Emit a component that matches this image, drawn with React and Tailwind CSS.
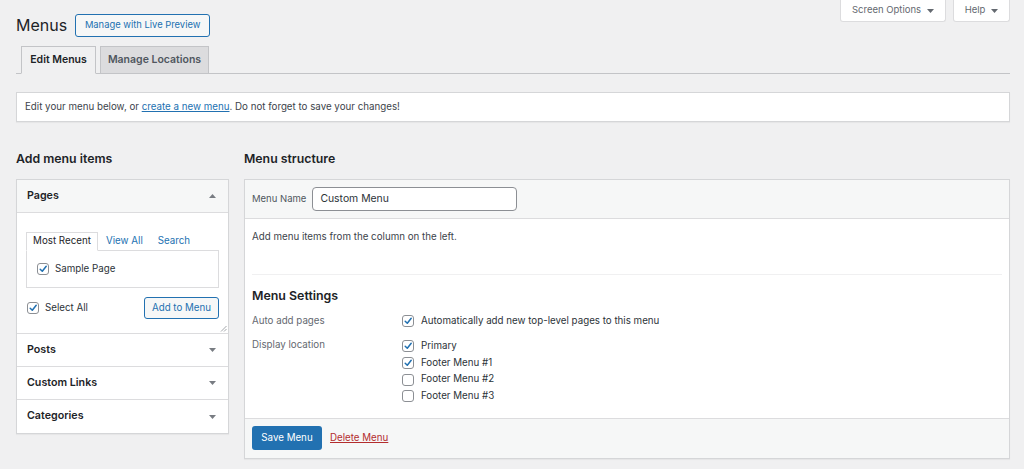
import React from "react";

const Tri = ({ up }) => (
  <svg width="7" height="4" viewBox="0 0 7 4" className="shrink-0">
    <path d={up ? "M0 4 L3.5 0 L7 4Z" : "M0 0 L7 0 L3.5 4Z"} fill="currentColor" />
  </svg>
);

const Check = ({ checked }) => (
  <span className="w-[12px] h-[12px] rounded-[3px] border border-[#8c8f94] bg-white flex items-center justify-center shrink-0">
    {checked && (
      <svg width="10" height="10" viewBox="0 0 10 10">
        <path d="M2.2 5.2 L4.3 7.3 L8.2 2.3" fill="none" stroke="#2271b1" strokeWidth="1.5" strokeLinecap="round" strokeLinejoin="round" />
      </svg>
    )}
  </span>
);

const Accordion = ({ title, last }) => (
  <div className={`h-[33px] flex items-center justify-between pl-[10px] pr-[12px] ${last ? "" : "border-b border-[#dcdcde]"}`}>
    <span className="text-[10.7px] font-semibold text-[#1d2327]">{title}</span>
    <span className="text-[#787c82]"><Tri /></span>
  </div>
);

export default function App() {
  return (
    <div className="w-[1024px] h-[469px] overflow-hidden bg-[#f0f0f1] text-[#1d2327] font-[family-name:Inter,Noto_Sans,sans-serif] text-[9.75px]">
      {/* top row */}
      <div className="flex justify-between items-start pl-[16px] pr-[14px]">
        <div className="flex items-center gap-[8px] pt-[14px]">
          <h1 className="text-[16px] leading-[23px] font-normal text-[#1d2327]">Menus</h1>
          <button className="h-[23px] w-[135px] border border-[#2271b1] rounded-[3px] bg-[#f6f7f7] text-[#2271b1] text-[9.4px]">
            Manage with Live Preview
          </button>
        </div>
        <div className="flex gap-[7px]">
          <div className="h-[22px] w-[106px] bg-white border border-t-0 border-[#dcdcde] rounded-b-[3px] flex items-center justify-center gap-[6px] text-[9.5px] text-[#646970]">
            Screen Options <Tri />
          </div>
          <div className="h-[22px] w-[57px] bg-white border border-t-0 border-[#dcdcde] rounded-b-[3px] flex items-center justify-center gap-[6px] text-[9.5px] text-[#646970]">
            Help <Tri />
          </div>
        </div>
      </div>

      {/* tabs */}
      <div className="ml-[16px] mr-[14px] mt-[9px] h-[28px] flex items-end gap-[4px] pl-[5px] border-b border-[#c3c4c7]">
        <div className="h-[28px] w-[75px] -mb-px flex items-center justify-center border border-[#c3c4c7] border-b-[#f0f0f1] bg-[#f0f0f1] text-[10.5px] font-semibold text-[#1d2327]">
          Edit Menus
        </div>
        <div className="h-[28px] w-[109px] -mb-px flex items-center justify-center border border-[#c3c4c7] bg-[#dcdcde] text-[10.5px] font-semibold text-[#50575e]">
          Manage Locations
        </div>
      </div>

      {/* notice */}
      <div className="ml-[16px] mr-[14px] mt-[18px] h-[30px] flex items-center px-[8px] bg-white border border-[#d5d6d8] shadow-[0_1px_1px_rgba(0,0,0,0.04)] text-[9.75px] text-[#3c434a]">
        <span>
          Edit your menu below, or <span className="text-[#2271b1] underline">create a new menu</span>. Do not forget to save your changes!
        </span>
      </div>

      {/* columns */}
      <div className="ml-[16px] mr-[14px] mt-[27px] flex gap-[15px] items-start">
        {/* left */}
        <div className="w-[213px] shrink-0">
          <h2 className="h-[20px] leading-[20px] text-[12.3px] font-semibold text-[#1d2327]">Add menu items</h2>
          <div className="mt-[10px] bg-white border border-[#d5d6d8] shadow-[0_1px_1px_rgba(0,0,0,0.04)]">
            <div className="h-[33px] flex items-center justify-between pl-[10px] pr-[12px] bg-[#f6f7f7] border-b border-[#dcdcde]">
              <span className="text-[10.7px] font-semibold">Pages</span>
              <span className="text-[#787c82]"><Tri up /></span>
            </div>
            <div className="relative pt-[19px] pb-[14px] pl-[9px] pr-[9px] border-b border-[#dcdcde]">
              <div className="flex items-end h-[18px] text-[9.75px]">
                <div className="relative z-10 h-[19px] w-[72px] -mb-px flex items-center justify-center border border-[#dcdcde] border-b-white bg-white text-[#1d2327]">
                  Most Recent
                </div>
                <span className="ml-[8px] h-[18px] flex items-center text-[#2271b1]">View All</span>
                <span className="ml-[15px] h-[18px] flex items-center text-[#2271b1]">Search</span>
              </div>
              <div className="h-[38px] border border-[#dcdcde] flex items-center gap-[6px] pl-[10px]">
                <Check checked />
                <span className="text-[#2c3338]">Sample Page</span>
              </div>
              <div className="mt-[9px] h-[22px] flex items-center justify-between">
                <div className="flex items-center gap-[6px] pl-[1px]">
                  <Check checked />
                  <span className="text-[#2c3338]">Select All</span>
                </div>
                <button className="h-[22px] w-[75px] border border-[#2271b1] rounded-[3px] bg-[#f6f7f7] text-[#2271b1] text-[9.75px]">
                  Add to Menu
                </button>
              </div>
              <svg width="7" height="7" viewBox="0 0 7 7" className="absolute right-[1px] bottom-[1px]">
                <path d="M6.5 1 L1 6.5 M6.5 4 L4 6.5" stroke="#8c8f94" strokeWidth="0.8" />
              </svg>
            </div>
            <Accordion title="Posts" />
            <Accordion title="Custom Links" />
            <Accordion title="Categories" last />
          </div>
        </div>

        {/* right */}
        <div className="flex-1">
          <h2 className="h-[20px] leading-[20px] text-[12.3px] font-semibold text-[#1d2327]">Menu structure</h2>
          <div className="mt-[10px] bg-white border border-[#d5d6d8] shadow-[0_1px_1px_rgba(0,0,0,0.04)]">
            <div className="h-[39px] flex items-center gap-[6px] pl-[7px] bg-[#f6f7f7] border-b border-[#dcdcde]">
              <span className="text-[9.5px] text-[#50575e]">Menu Name</span>
              <div className="h-[24px] w-[205px] bg-white border border-[#8c8f94] rounded-[4px] flex items-center pl-[7px] text-[10.4px] text-[#2c3338]">
                Custom Menu
              </div>
            </div>
            <div className="px-[7px]">
              <div className="pt-[10px] pb-[29px] border-b border-[#f0f0f1] leading-[16px] text-[9.75px] text-[#3c434a]">
                Add menu items from the column on the left.
              </div>
              <h3 className="mt-[12px] h-[18px] leading-[18px] text-[12.4px] font-semibold text-[#1d2327]">Menu Settings</h3>
              <div className="mt-[8px] flex h-[16px] items-center">
                <span className="w-[150px] text-[#646970]">Auto add pages</span>
                <div className="flex items-center gap-[7px]">
                  <Check checked />
                  <span className="text-[#2c3338]">Automatically add new top-level pages to this menu</span>
                </div>
              </div>
              <div className="mt-[8px] pb-[13px] flex">
                <span className="w-[150px] h-[16px] leading-[16px] text-[#646970]">Display location</span>
                <div className="flex flex-col pt-[1px]">
                  {[["Primary", true], ["Footer Menu #1", true], ["Footer Menu #2", false], ["Footer Menu #3", false]].map(([t, c]) => (
                    <div key={t} className="h-[16.67px] flex items-center gap-[7px]">
                      <Check checked={c} />
                      <span className="text-[#2c3338]">{t}</span>
                    </div>
                  ))}
                </div>
              </div>
            </div>
            <div className="h-[40px] flex items-center gap-[8px] pl-[7px] bg-[#f6f7f7] border-t border-[#dcdcde]">
              <button className="h-[24px] w-[70px] rounded-[3px] bg-[#2271b1] text-white text-[9.75px]">Save Menu</button>
              <span className="text-[#b32d2e] underline text-[9.75px]">Delete Menu</span>
            </div>
          </div>
        </div>
      </div>
    </div>
  );
}
